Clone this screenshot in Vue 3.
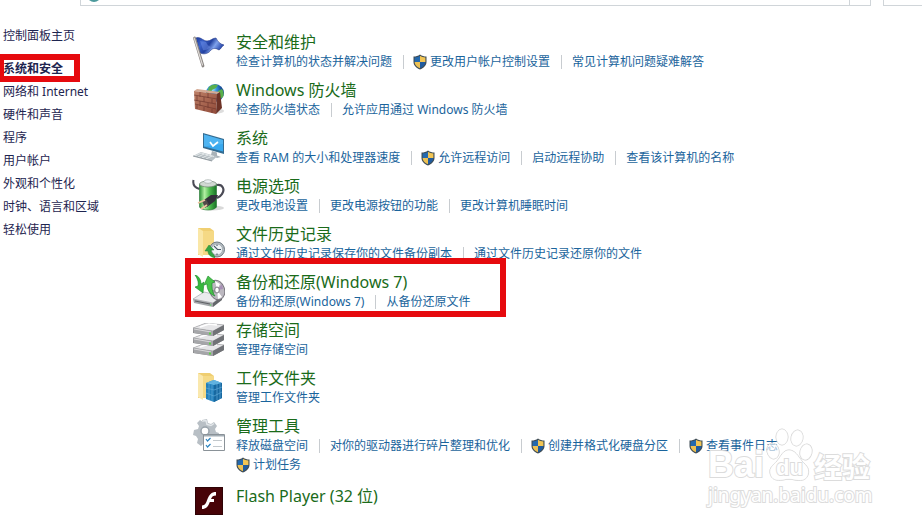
<script setup>
const categories = ['网络和 Internet', '硬件和声音', '程序', '用户帐户', '外观和个性化', '时钟、语言和区域', '轻松使用']

const groups = [
  { icon: 'flag', title: '安全和维护', links: [{ t: '检查计算机的状态并解决问题' }, { t: '更改用户帐户控制设置', shield: true }, { t: '常见计算机问题疑难解答' }] },
  { icon: 'firewall', title: 'Windows 防火墙', links: [{ t: '检查防火墙状态' }, { t: '允许应用通过 Windows 防火墙' }] },
  { icon: 'system', title: '系统', links: [{ t: '查看 RAM 的大小和处理器速度' }, { t: '允许远程访问', shield: true }, { t: '启动远程协助' }, { t: '查看该计算机的名称' }] },
  { icon: 'power', title: '电源选项', links: [{ t: '更改电池设置' }, { t: '更改电源按钮的功能' }, { t: '更改计算机睡眠时间' }] },
  { icon: 'history', title: '文件历史记录', links: [{ t: '通过文件历史记录保存你的文件备份副本' }, { t: '通过文件历史记录还原你的文件' }] },
  { icon: 'backup', title: '备份和还原(Windows 7)', marked: true, links: [{ t: '备份和还原(Windows 7)' }, { t: '从备份还原文件' }] },
  { icon: 'storage', title: '存储空间', links: [{ t: '管理存储空间' }] },
  { icon: 'work', title: '工作文件夹', links: [{ t: '管理工作文件夹' }] },
  { icon: 'admin', title: '管理工具', links: [{ t: '释放磁盘空间' }, { t: '对你的驱动器进行碎片整理和优化' }, { t: '创建并格式化硬盘分区', shield: true }, { t: '查看事件日志', shield: true, last: true }, { t: '计划任务', shield: true }] },
  { icon: 'flash', title: 'Flash Player (32 位)', links: [] }
]

const lines = (links) => {
  const cut = links.findIndex((l) => l.last) + 1
  return cut ? [links.slice(0, cut), links.slice(cut)] : [links]
}
</script>

<template>
  <div class="window">
    <header class="toolbar">
      <div class="address">
        <svg class="globe" viewBox="0 0 10 3" aria-hidden="true"><path d="M0 0h10Q5 4 0 0" fill="#4c9a9c" /></svg>
        <span class="refresh"></span>
      </div>
      <div class="search"></div>
    </header>

    <div class="body">
      <nav class="side">
        <a class="home" href="#">控制面板主页</a>
        <a class="current" href="#">系统和安全</a>
        <a v-for="c in categories" :key="c" href="#">{{ c }}</a>
      </nav>

      <main class="list">
        <section v-for="g in groups" :key="g.icon" class="group" :class="{ marked: g.marked, solo: !g.links.length }">
          <svg class="icon" viewBox="0 0 33 33" aria-hidden="true">
            <template v-if="g.icon === 'flag'">
              <defs>
                <linearGradient id="fl" x1="0" x2="1" y1="0" y2=".4">
                  <stop offset="0" stop-color="#1d3b9b" /><stop offset=".3" stop-color="#3c64cb" /><stop offset=".55" stop-color="#21409f" /><stop offset=".75" stop-color="#7fa2ec" /><stop offset="1" stop-color="#2747ab" />
                </linearGradient>
              </defs>
              <path d="M4 3C8 1 11 6 15 6c4 0 5-3 9-3 2 4 4 6 8 7-2 1-3 4-5 5-3-2-6-2-8 0-2 3-6 5-11 3Z" fill="url(#fl)" stroke="#23398a" stroke-width=".6" />
              <path d="M8 6l3 9c2 1 5-1 8-3-3-1-4-3-5-5-2 0-4-1-6-1Z" fill="#6d90e8" opacity=".5" />
              <path d="M2.500 3 11 31" stroke="#8a8582" stroke-width="2.800" stroke-linecap="round" />
              <path d="M2.200 3 10.500 30" stroke="#ddd9d6" stroke-width="1.200" stroke-linecap="round" />
            </template>

            <template v-else-if="g.icon === 'firewall'">
              <defs>
                <radialGradient id="gl" cx=".35" cy=".3"><stop offset="0" stop-color="#b6ecff" /><stop offset=".45" stop-color="#3698dd" /><stop offset="1" stop-color="#174d98" /></radialGradient>
                <linearGradient id="br" x1="0" x2="1" y2="1"><stop offset="0" stop-color="#bd8067" /><stop offset="1" stop-color="#914a39" /></linearGradient>
              </defs>
              <ellipse cx="25" cy="28" rx="7" ry="2.500" fill="#ddd" />
              <circle cx="23" cy="10" r="9" fill="url(#gl)" />
              <path d="M17 4c3-3 7-3 9-2l-2 3-4 2-2 4-3-1Zm9 4 4-2c2 3 2 6 1 8l-3 2-3-4Z" fill="#58af4c" />
              <path d="m2 8 3-2 23 3-3 2Z" fill="#d5aa94" />
              <path d="m2 8 23 3-1 20L3 26Z" fill="url(#br)" />
              <path d="m25 11 3-2 2 16-6 6Z" fill="#6d3327" />
              <path d="m2 12 23 4M2 17l22 4M3 21l21 5M8 9v5m8-4v5M5 13v5m7-4v5m8-3v4M8 18v5m8-3v5M5 22v4m7-2v4m8-2v4" stroke="#70382e" stroke-width=".7" fill="none" />
            </template>

            <template v-else-if="g.icon === 'system'">
              <path d="m11 2 21 6v15l-21-6Z" fill="#356c91" />
              <path d="m12 3.500 19 5.500v11.500l-19-5Z" fill="#38a8ee" />
              <path d="m12 3.500 19 5.500v4L12 15.500Z" fill="#65bff4" opacity=".5" />
              <path d="m18 11 3 4 5-4" stroke="#fff" stroke-width="1.700" fill="none" />
              <path d="m20 20 5 1.500v3l4 1.500-4 1-6-3Z" fill="#a9b2b8" />
              <path d="m1 25 8-4 16 4.500-5 4.500Z" fill="#b8c0c5" />
              <path d="m3 25 6-3 13 3.500M6 26l6-3m-2 4 6-3m-2 4 6-3" stroke="#eef1f3" stroke-width=".8" fill="none" />
              <path d="m1 25 19 5" stroke="#7f898f" stroke-width=".8" />
            </template>

            <template v-else-if="g.icon === 'power'">
              <defs>
                <linearGradient id="ba"><stop offset="0" stop-color="#2c9136" /><stop offset=".3" stop-color="#b2efa3" /><stop offset=".6" stop-color="#4dbb4d" /><stop offset="1" stop-color="#187126" /></linearGradient>
              </defs>
              <ellipse cx="20" cy="29" rx="12" ry="2.500" fill="#d9d9d9" />
              <path d="M1.500 1c-1 5 2 8 6 9" stroke="#4a4a55" stroke-width="2" fill="none" />
              <path d="M7.500 5v23c2 4 15 4 17 0V5Z" fill="url(#ba)" stroke="#237331" stroke-width=".6" />
              <ellipse cx="16" cy="5" rx="8.500" ry="3" fill="#d1d8d2" stroke="#6e8271" stroke-width=".7" />
              <ellipse cx="16" cy="2.500" rx="4" ry="1.800" fill="#eef2f4" stroke="#98a39f" stroke-width=".6" />
              <path d="M25 6c6-1 8 5 5 9-1 2-3 3-5 4" stroke="#4a4a55" stroke-width="2.200" fill="none" />
              <path d="m12 21 7-5 7 0-3 6-8 6Z" fill="#33303a" />
              <path d="m10 22 4-2 3 6-4 3Z" fill="#524a4a" />
              <path d="m13 21-7 3m9 2-6 4" stroke="#efc5a0" stroke-width="1.700" />
            </template>

            <template v-else-if="g.icon === 'history'">
              <path d="M6 1h12l4 3v23L6 28Z" fill="#f0cf72" />
              <path d="m6 1 5 3v26l-5-3Z" fill="#fae7a7" />
              <path d="M11 4h11v24H11Z" fill="#f5d985" />
              <circle cx="25" cy="22.500" r="7.500" fill="#b5bdc2" stroke="#6c777f" />
              <circle cx="25" cy="22.500" r="5.500" fill="#eef2f5" stroke="#8b959c" stroke-width=".6" />
              <path d="m22 19 3.500 3.500H29M25 17.500V19m0 7.500V28" stroke="#485866" stroke-width="1.100" fill="none" />
              <path d="M22 28c-2-2-3-3-3-5h3l-5-5-4 6h3c0 4 3 6 7 7Z" fill="#35a643" stroke="#1f8030" stroke-width=".5" />
            </template>

            <template v-else-if="g.icon === 'backup'">
              <path d="m1 24 11-7 18 4-9 7Z" fill="#eaebed" stroke="#999ba0" stroke-width=".6" />
              <path d="m1 24 20 4v4L2 28Z" fill="#a4a6aa" /><path d="m21 28 9-7v4l-9 7Z" fill="#64676b" />
              <path d="m3 26 15 3" stroke="#5d6064" />
              <circle cx="18.500" cy="30" r=".8" fill="#5edc61" />
              <ellipse cx="25" cy="15" rx="7.500" ry="10" transform="rotate(-18 25 15)" fill="#bcb8c0" stroke="#77747b" />
              <path d="m25 15-2-9 5 3Zm0 0 5 7-4 2Z" fill="#fff" /><path d="m25 15 6-1-1-5Z" fill="#a890b6" /><path d="m25 15-5 5-2-5Z" fill="#8f9a91" />
              <ellipse cx="25" cy="15" rx="2.300" ry="3" fill="#fff" stroke="#7b7880" />
              <path d="M3 0c4 1 6 5 6 9l3-2-1 11-8-6 3-1c1-4-1-8-3-11Z" fill="#36b83d" stroke="#168526" stroke-width=".6" />
              <path d="m16 1 7 6-3 1c0 5 0 9 3 13-6-2-8-7-8-12l-3 1Z" fill="#48c24a" stroke="#168526" stroke-width=".6" />
            </template>

            <template v-else-if="g.icon === 'storage'">
              <g v-for="y in [20, 10, 0]" :key="y" :transform="`translate(0 ${y})`">
                <path d="m1 5 13-5 18 2v5l-11 6L1 10Z" fill="#88898c" />
                <path d="m1 5 13-5 18 2-11 6Z" fill="#e6e6e8" stroke="#a5a5a7" stroke-width=".6" />
                <path d="m1 5 20 3v5L2 10Z" fill="#a5a6a9" /><path d="m21 8 11-6v5l-11 6Z" fill="#707276" />
                <path d="m2 6 17 3" stroke="#d8d8da" /><path d="m8 4 9-3 8 1" stroke="#fff" stroke-width="1.500" fill="none" />
                <path d="M18 9.500v2" stroke="#5bd044" stroke-width="2" />
              </g>
            </template>

            <template v-else-if="g.icon === 'work'">
              <path d="M6 2h12l4 3v21L6 27Z" fill="#efce71" /><path d="m6 2 5 3v24l-5-3Z" fill="#fae8ad" /><path d="M11 5h11v22H11Z" fill="#f5da87" />
              <path d="m14 12 8-3 8 3v15l-8 4-8-3Z" fill="#237fba" />
              <path d="m14 12 8-3 8 3-8 2Z" fill="#64b8e5" /><path d="m22 14 8-2v15l-8 4Z" fill="#1768a0" />
              <path d="m14 17 8 2 8-3M14 22l8 3 8-4M17 13v16m3-15v16m5-17v16m3-17v16M17 11l8 2m-6-3 8 2" stroke="#5fabd8" stroke-width=".7" fill="none" />
            </template>

            <template v-else-if="g.icon === 'admin'">
              <path d="m10 1 5-1 1 4 3 1 3-2 3 4-2 3 1 3 3 1-1 5-4 1-2 3-8 1-3 3-4-3 1-4-2-3-3-1 1-5 4-1 1-3-2-3 3-3 3 2Z" fill="#b8bfc5" />
              <path d="m11 2 3-.500 1 4 4 1 3-2" stroke="#e3e7ea" stroke-width="1.500" fill="none" />
              <circle cx="13" cy="12" r="4" fill="#fff" stroke="#98a2aa" stroke-width="1.500" />
              <path d="M11.500 15.500h21v16h-21Z" fill="#fff" stroke="#8a9298" />
              <path d="M12 16h20v1.500H12Z" fill="#a3adb4" />
              <path d="m14 20 1.500 2 3-3M14 26l1.500 2 3-3" stroke="#2c83bf" stroke-width="1.200" fill="none" />
              <path d="M21 21.500h9M21 27.500h9" stroke="#c3c9cd" />
            </template>

            <template v-else>
              <path d="M3 1h28v28H3Z" fill="#470307" /><path d="M3.500 1.500h27v27h-27Z" fill="none" stroke="#2e0306" />
              <path d="M24 6v3.500c-3 0-4 1-5 3.500h3v3h-4.200c-1.500 4.500-3.800 7-7.800 7v-3.500c3 0 4.300-3 5.300-6 2-5 4-7.500 8.700-7.500Z" fill="#fff" />
            </template>
          </svg>

          <div class="text">
            <h2><a href="#">{{ g.title }}</a></h2>
            <template v-if="g.links.length">
              <ul v-for="(line, i) in lines(g.links)" :key="i">
                <li v-for="l in line" :key="l.t" :class="{ guarded: l.shield }">
                  <svg v-if="l.shield" class="shield" viewBox="0 0 14 16" aria-hidden="true">
                    <path d="M7 .500C5 2 3 2.500.500 2.500V8c0 3.500 3 6 6.500 7.500C10.500 14 13.500 11.500 13.500 8V2.500C11 2.500 9 2 7 .500Z" fill="#3f4c54" />
                    <path d="M7 1.800C5.500 3 3.500 3.500 1.600 3.500V8H7Z" fill="#2469ae" /><path d="M7 1.800C8.500 3 10.500 3.500 12.400 3.500V8H7Z" fill="#f2c554" />
                    <path d="M1.600 8H7v6.300C4 13 1.600 10.800 1.600 8Z" fill="#edc153" /><path d="M12.400 8H7v6.300c3-1.300 5.400-3.500 5.400-6.300Z" fill="#205b9e" />
                  </svg>
                  <a href="#">{{ l.t }}</a>
                </li>
              </ul>
            </template>
          </div>
        </section>
      </main>
    </div>

    <div class="watermark">
      <div class="brand">
        <span class="bai">Bai</span>
        <span class="paw">
          <svg viewBox="0 0 48 54" aria-hidden="true">
            <g fill="#fff" fill-opacity=".6" stroke="#d0d0d0" stroke-width="1">
              <ellipse cx="7" cy="23" rx="6" ry="8" transform="rotate(-12 7 23)" />
              <ellipse cx="16" cy="9" rx="6" ry="8" />
              <ellipse cx="31" cy="10" rx="6" ry="8" transform="rotate(12 31 10)" />
              <ellipse cx="40" cy="24" rx="6" ry="8" transform="rotate(14 40 24)" />
              <path d="M23 22c6 0 9 6 13 11 5 5 8 8 6 14-2 6-8 6-13 5-4-1-8-1-12 0-6 1-12 0-13-7-1-5 3-8 7-12 4-5 6-11 12-11Z" />
            </g>
          </svg>
          <span class="du">du</span>
        </span>
        <span class="jy">经验</span>
      </div>
      <div class="site">jingyan.baidu.com</div>
    </div>
  </div>
</template>

<style>
body {
  margin: 0;
  background: #fff;
}
</style>

<style scoped>
.window {
  position: relative;
  min-height: 100vh;
  overflow: hidden;
  font: 12px/19px "Noto Sans", "Noto Sans CJK SC", sans-serif;
  color: #1e2550;
}
a {
  color: inherit;
  text-decoration: none;
}
.toolbar {
  display: flex;
  gap: 12px;
  height: 6px;
  padding-left: 80px;
}
.address,
.search {
  box-sizing: border-box;
  border: 1px solid #d0d5d9;
  border-top: 0;
}
.address {
  display: flex;
  flex: 1;
  justify-content: space-between;
  padding-left: 8px;
}
.globe {
  width: 10px;
  height: 3px;
}
.refresh {
  width: 20px;
  border-left: 1px solid #d0d5d9;
}
.search {
  width: 39px;
  border-right: 0;
}
.body {
  display: flex;
}
.side {
  display: flex;
  flex: 0 0 189px;
  flex-direction: column;
  align-items: flex-start;
  box-sizing: border-box;
  padding: 18px 0 0 3px;
  line-height: 23px;
}
.side .home {
  margin-bottom: 10px;
}
.side .current {
  position: relative;
  font-weight: 700;
}
.current::after {
  content: "";
  position: absolute;
  inset: -3px -17px -2px -5px;
  border: 6px solid #e60a0e;
}
.list {
  flex: 1;
  min-width: 0;
  padding: 27px 0 8px 3px;
}
.group {
  position: relative;
  display: flex;
  gap: 11px;
  padding-bottom: 10px;
}
.marked::after {
  content: "";
  position: absolute;
  top: -15px;
  bottom: 4px;
  left: -7px;
  width: 309px;
  border: 6px solid #e60a0e;
}
.icon {
  flex: none;
  width: 33px;
  height: 33px;
  margin-top: 2px;
}
h2 {
  margin: 0;
  font-size: 16px;
  font-weight: 400;
  line-height: 19px;
  color: #1a6b1a;
}
.solo h2 {
  line-height: 25px;
}
ul {
  display: flex;
  margin: 0;
  padding: 0;
  list-style: none;
  color: #1a649c;
}
li {
  display: flex;
  align-items: center;
  gap: 3px;
  white-space: nowrap;
}
li + li::before {
  content: "";
  width: 1px;
  height: 14px;
  margin: 0 7px 0 11px;
  background: #c8ccd0;
}
li.guarded::before {
  margin-right: 6px;
}
.shield {
  width: 14px;
  height: 16px;
}
.watermark {
  position: absolute;
  top: 428px;
  left: 708px;
  color: #fff;
  paint-order: stroke fill;
  -webkit-text-stroke: 2px #dcdcdc;
}
.brand {
  display: flex;
  align-items: flex-end;
  height: 54px;
  font-weight: 700;
}
.bai {
  width: 58px;
  font: 700 36px/34px "Liberation Sans", sans-serif;
}
.paw {
  position: relative;
  width: 48px;
  height: 54px;
}
.paw svg {
  width: 48px;
  height: 54px;
}
.du {
  position: absolute;
  top: 28px;
  left: 10px;
  font: 700 22px/24px "Liberation Sans", sans-serif;
}
.jy {
  font-size: 28px;
  line-height: 30px;
}
.site {
  font: 19px/27px "Noto Sans", sans-serif;
}
</style>
